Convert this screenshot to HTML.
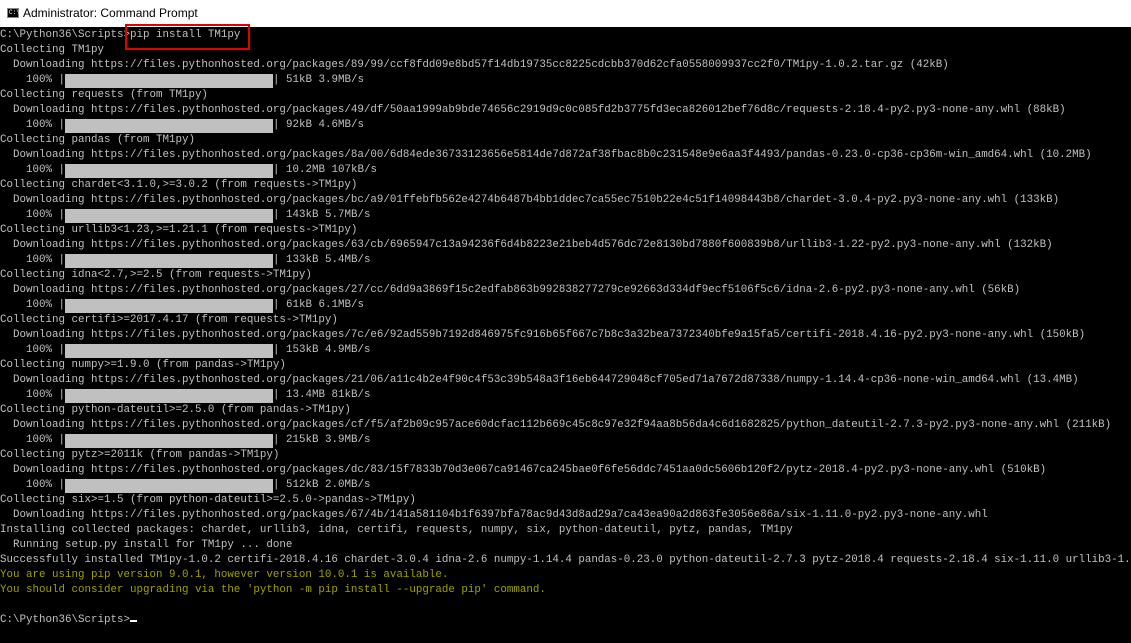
<!DOCTYPE html>
<html><head><meta charset="utf-8"><style>
html,body{margin:0;padding:0;width:1131px;height:643px;overflow:hidden;background:#000}
#tb{position:absolute;left:0;top:0;width:1131px;height:27px;background:#fff;font-family:"Liberation Sans",sans-serif;font-size:12px;color:#000}
#tb .t{position:absolute;left:23px;top:6px}
#tb .i{position:absolute;left:7px;top:8px;width:12px;height:10px;background:#000;border:1px solid #888;box-sizing:border-box}
#tb .i span{position:absolute;left:1px;top:0px;font-size:6px;color:#fff;font-family:"Liberation Mono",monospace;line-height:8px}
pre{position:absolute;left:0;top:28px;margin:0;font-family:"Liberation Mono",monospace;font-size:10.83px;line-height:15px;color:#c0c0c0;white-space:pre}
.b{background:#c0c0c0;display:inline-block;width:208px;height:14px;vertical-align:top;margin-top:1px}
.y{color:#a0a000}
.c{display:inline-block;width:7px;height:2px;background:#fff;vertical-align:baseline}
#box{position:absolute;left:125px;top:24px;width:121px;height:22px;border:2px solid #e00000}
</style></head><body>
<div id="tb"><div class="i"><span>C:\</span></div><div class="t">Administrator: Command Prompt</div></div>
<pre>C:\Python36\Scripts&gt;pip install TM1py
Collecting TM1py
  Downloading https://files.pythonhosted.org/packages/89/99/ccf8fdd09e8bd57f14db19735cc8225cdcbb370d62cfa0558009937cc2f0/TM1py-1.0.2.tar.gz (42kB)
    100% |<span class="b"></span>| 51kB 3.9MB/s
Collecting requests (from TM1py)
  Downloading https://files.pythonhosted.org/packages/49/df/50aa1999ab9bde74656c2919d9c0c085fd2b3775fd3eca826012bef76d8c/requests-2.18.4-py2.py3-none-any.whl (88kB)
    100% |<span class="b"></span>| 92kB 4.6MB/s
Collecting pandas (from TM1py)
  Downloading https://files.pythonhosted.org/packages/8a/00/6d84ede36733123656e5814de7d872af38fbac8b0c231548e9e6aa3f4493/pandas-0.23.0-cp36-cp36m-win_amd64.whl (10.2MB)
    100% |<span class="b"></span>| 10.2MB 107kB/s
Collecting chardet&lt;3.1.0,&gt;=3.0.2 (from requests-&gt;TM1py)
  Downloading https://files.pythonhosted.org/packages/bc/a9/01ffebfb562e4274b6487b4bb1ddec7ca55ec7510b22e4c51f14098443b8/chardet-3.0.4-py2.py3-none-any.whl (133kB)
    100% |<span class="b"></span>| 143kB 5.7MB/s
Collecting urllib3&lt;1.23,&gt;=1.21.1 (from requests-&gt;TM1py)
  Downloading https://files.pythonhosted.org/packages/63/cb/6965947c13a94236f6d4b8223e21beb4d576dc72e8130bd7880f600839b8/urllib3-1.22-py2.py3-none-any.whl (132kB)
    100% |<span class="b"></span>| 133kB 5.4MB/s
Collecting idna&lt;2.7,&gt;=2.5 (from requests-&gt;TM1py)
  Downloading https://files.pythonhosted.org/packages/27/cc/6dd9a3869f15c2edfab863b992838277279ce92663d334df9ecf5106f5c6/idna-2.6-py2.py3-none-any.whl (56kB)
    100% |<span class="b"></span>| 61kB 6.1MB/s
Collecting certifi&gt;=2017.4.17 (from requests-&gt;TM1py)
  Downloading https://files.pythonhosted.org/packages/7c/e6/92ad559b7192d846975fc916b65f667c7b8c3a32bea7372340bfe9a15fa5/certifi-2018.4.16-py2.py3-none-any.whl (150kB)
    100% |<span class="b"></span>| 153kB 4.9MB/s
Collecting numpy&gt;=1.9.0 (from pandas-&gt;TM1py)
  Downloading https://files.pythonhosted.org/packages/21/06/a11c4b2e4f90c4f53c39b548a3f16eb644729048cf705ed71a7672d87338/numpy-1.14.4-cp36-none-win_amd64.whl (13.4MB)
    100% |<span class="b"></span>| 13.4MB 81kB/s
Collecting python-dateutil&gt;=2.5.0 (from pandas-&gt;TM1py)
  Downloading https://files.pythonhosted.org/packages/cf/f5/af2b09c957ace60dcfac112b669c45c8c97e32f94aa8b56da4c6d1682825/python_dateutil-2.7.3-py2.py3-none-any.whl (211kB)
    100% |<span class="b"></span>| 215kB 3.9MB/s
Collecting pytz&gt;=2011k (from pandas-&gt;TM1py)
  Downloading https://files.pythonhosted.org/packages/dc/83/15f7833b70d3e067ca91467ca245bae0f6fe56ddc7451aa0dc5606b120f2/pytz-2018.4-py2.py3-none-any.whl (510kB)
    100% |<span class="b"></span>| 512kB 2.0MB/s
Collecting six&gt;=1.5 (from python-dateutil&gt;=2.5.0-&gt;pandas-&gt;TM1py)
  Downloading https://files.pythonhosted.org/packages/67/4b/141a581104b1f6397bfa78ac9d43d8ad29a7ca43ea90a2d863fe3056e86a/six-1.11.0-py2.py3-none-any.whl
Installing collected packages: chardet, urllib3, idna, certifi, requests, numpy, six, python-dateutil, pytz, pandas, TM1py
  Running setup.py install for TM1py ... done
Successfully installed TM1py-1.0.2 certifi-2018.4.16 chardet-3.0.4 idna-2.6 numpy-1.14.4 pandas-0.23.0 python-dateutil-2.7.3 pytz-2018.4 requests-2.18.4 six-1.11.0 urllib3-1.
<span class="y">You are using pip version 9.0.1, however version 10.0.1 is available.</span>
<span class="y">You should consider upgrading via the 'python -m pip install --upgrade pip' command.</span>

C:\Python36\Scripts&gt;<span class="c"></span></pre>
<div id="box"></div>
</body></html>
